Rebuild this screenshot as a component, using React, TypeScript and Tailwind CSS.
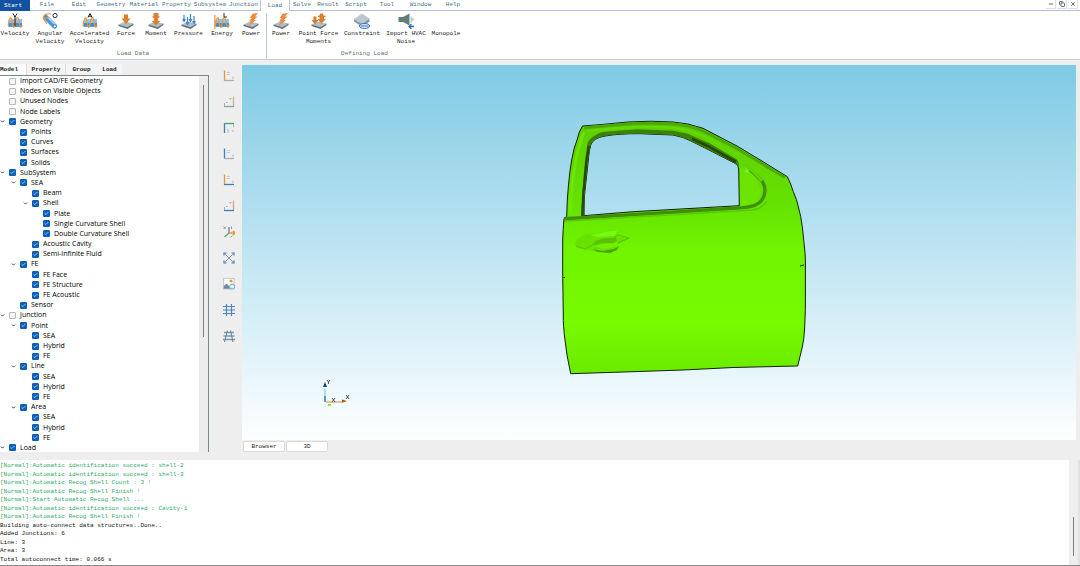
import React, { useState } from "react";
import { Check, ChevronDown, Copy, Minus, X } from "lucide-react";
import clsx from "clsx";

const MONO = "font-['Liberation_Mono',monospace]";

const menus = [
    { label: "File", width: "w-[34px]" },
    { label: "Edit", width: "w-[30px]" },
    { label: "Geometry", width: "w-[34px]" },
    { label: "Material", width: "w-[32px]" },
    { label: "Property", width: "w-[33px]" },
    { label: "Subsystem", width: "w-[34px]" },
    { label: "Junction", width: "w-[33px]" },
    { label: "Load", width: "w-[30px]" },
    { label: "Solve", width: "w-[24px]" },
    { label: "Result", width: "w-[28px]" },
    { label: "Script", width: "w-[28px]" },
    { label: "Tool", width: "w-[34px]" },
    { label: "Window", width: "w-[33px]" },
    { label: "Help", width: "w-[32px]" },
];

const Plate = () => (
    <>
        <path d="M0.5 11.5 L7 8.5 L15.5 10.5 L9.5 14 Z" fill="#b3bec4" />
        <path d="M0.5 11.5 L9.5 14 L15.5 10.5 V12 L9.5 16 L0.5 13 Z" fill="#5f7377" />
    </>
);

const Wave = () => (
    <>
        <path d="M1.5 7.5 L4 6 H15 V13.5 H1.5 Z" fill="#8cc5f2" />
        <path d="M1.5 10 H15 V13.8 H1.5 Z" fill="#3d8fdc" />
        <path
            d="M1.2 13 C2 3 4.5 3 5.2 9 S7.4 17 8.2 10 S11.5 3 12.2 9 S14 15.5 15.2 12"
            fill="none"
            stroke="#f0942c"
            strokeWidth="1.2"
        />
    </>
);

const Bolt = () => (
    <path d="M9.5 0.8 L15 0 L12 3.6 H14.6 L10.8 7 H13 L5.6 13 L8 8.5 H6 L8.8 5 H7 Z" fill="#f0883a" />
);

const glyphs: Record<string, React.ReactNode> = {
    velocity: (
        <>
            <Wave />
            <path d="M6 0.5 L8 4 L10 0.5 M8 3 V13" stroke="#222" strokeWidth="1" fill="none" />
        </>
    ),
    angular: (
        <>
            <path d="M4 4.5 L12.5 13" stroke="#4a94dc" strokeWidth="5" strokeLinecap="round" />
            <path d="M5.5 4 L13.5 12" stroke="#a9d2f3" strokeWidth="1.6" />
            <circle cx="12.8" cy="13.3" r="1.6" fill="#fff" stroke="#2f74bb" strokeWidth="0.9" />
            <path d="M9 1 C3 0 0.5 3 1.5 6 L5 11 M1.5 6 L7 4" fill="none" stroke="#f0942c" strokeWidth="1.1" />
            <ellipse cx="13" cy="2.6" rx="2.1" ry="2.2" fill="none" stroke="#333" strokeWidth="1" />
        </>
    ),
    accelerated: (
        <>
            <Wave />
            <path d="M6 4.5 L8 0.5 L10 4.5 M7 3.2 H9" stroke="#222" strokeWidth="1" fill="none" />
        </>
    ),
    force: (
        <>
            <Plate />
            <path d="M6 1.5 H10 V5.5 H12.5 L8 11 L3.5 5.5 H6 Z" fill="#df7f2d" />
        </>
    ),
    moment: (
        <>
            <Plate />
            <path d="M5.5 0 H10.5 V3.5 H12.5 L8 7 L3.5 3.5 H5.5 Z M6 6 H10 V8 H12.5 L8 12.5 L3.5 8 H6 Z" fill="#df7f2d" />
        </>
    ),
    pressure: (
        <>
            <Plate />
            <path
                d="M3 2 V8 M1.6 6.2 L3 8.3 L4.4 6.2 M6.5 4 V11 M5.1 9.2 L6.5 11.3 L7.9 9.2 M9.5 1 V8 M8.1 6.2 L9.5 8.3 L10.9 6.2 M13 3 V10 M11.6 8.2 L13 10.3 L14.4 8.2"
                fill="none"
                stroke="#3f86d3"
                strokeWidth="1.2"
            />
        </>
    ),
    energy: (
        <>
            <Wave />
            <path d="M0.8 2 V16" stroke="#f0942c" strokeWidth="1.2" />
            <path d="M10 0 V4 H13" stroke="#333" strokeWidth="1" fill="none" />
        </>
    ),
    power: (
        <>
            <Plate />
            <Bolt />
        </>
    ),
    pointForce: (
        <>
            <Plate />
            <path
                d="M2.5 3.5 H5.5 V7 H7.5 L4 11.5 L0.5 7 H2.5 Z M8.8 0.5 H12.2 V2.5 H14.5 V4 H13 V6 H15 L10.5 10.5 L6.5 6 H8.5 V4 H7 V2.5 H8.8 Z"
                fill="#d97f2b"
            />
        </>
    ),
    constraint: (
        <>
            <path d="M0 6 L8 0.5 L15.5 5.5 L8 11 Z" fill="#bdc7d2" />
            <path d="M0 6 L8 11 L15.5 5.5 V8.5 L8 13.5 L0 8.5 Z" fill="#8794a1" />
            <ellipse cx="10.5" cy="13" rx="5" ry="2.4" fill="#e9f3fd" stroke="#2d6fba" strokeWidth="1" />
            <path d="M6.5 13 H14.5" stroke="#2d6fba" strokeWidth="1" />
        </>
    ),
    hvac: (
        <>
            <path d="M0.5 4 H5 L11.5 0.5 V12.5 L5 9 H0.5 Z" fill="#5e7f78" />
            <path d="M13.2 3.5 V10 M15 5 V8" stroke="#9fb1ad" strokeWidth="1" />
            <path d="M16 13.5 H11.5 M13.4 11.3 L11.2 13.5 L13.4 15.7" stroke="#2d6fba" strokeWidth="1.6" fill="none" />
        </>
    ),
};

const groups = [
    {
        title: "Load Data",
        items: [
            { label: "Velocity", glyph: "velocity", width: "w-[30px]" },
            { label: "Angular Velocity", glyph: "angular", width: "w-[40px]" },
            { label: "Accelerated Velocity", glyph: "accelerated", width: "w-[39px]" },
            { label: "Force", glyph: "force", width: "w-[34px]" },
            { label: "Moment", glyph: "moment", width: "w-[26px]" },
            { label: "Pressure", glyph: "pressure", width: "w-[39px]" },
            { label: "Energy", glyph: "energy", width: "w-[28px]" },
            { label: "Power", glyph: "power", width: "w-[30px]" },
        ],
    },
    {
        title: "Defining Load",
        items: [
            { label: "Power", glyph: "power", width: "w-[28px]" },
            { label: "Point Force Moments", glyph: "pointForce", width: "w-[47px]" },
            { label: "Constraint", glyph: "constraint", width: "w-[40px]" },
            { label: "Import HVAC Noise", glyph: "hvac", width: "w-[48px]" },
            { label: "Monopole", glyph: "", width: "w-[32px]" },
        ],
    },
];

type Row = { label: string; level: number; on?: boolean; open?: boolean };

const rows: Row[] = [
    { label: "Import CAD/FE Geometry", level: 0 },
    { label: "Nodes on Visible Objects", level: 0 },
    { label: "Unused Nodes", level: 0 },
    { label: "Node Labels", level: 0 },
    { label: "Geometry", level: 0, on: true, open: true },
    { label: "Points", level: 1, on: true },
    { label: "Curves", level: 1, on: true },
    { label: "Surfaces", level: 1, on: true },
    { label: "Solids", level: 1, on: true },
    { label: "SubSystem", level: 0, on: true, open: true },
    { label: "SEA", level: 1, on: true, open: true },
    { label: "Beam", level: 2, on: true },
    { label: "Shell", level: 2, on: true, open: true },
    { label: "Plate", level: 3, on: true },
    { label: "Single Curvature Shell", level: 3, on: true },
    { label: "Double Curvature Shell", level: 3, on: true },
    { label: "Acoustic Cavity", level: 2, on: true },
    { label: "Semi-Infinite Fluid", level: 2, on: true },
    { label: "FE", level: 1, on: true, open: true },
    { label: "FE Face", level: 2, on: true },
    { label: "FE Structure", level: 2, on: true },
    { label: "FE Acoustic", level: 2, on: true },
    { label: "Sensor", level: 1, on: true },
    { label: "Junction", level: 0, open: true },
    { label: "Point", level: 1, on: true, open: true },
    { label: "SEA", level: 2, on: true },
    { label: "Hybrid", level: 2, on: true },
    { label: "FE", level: 2, on: true },
    { label: "Line", level: 1, on: true, open: true },
    { label: "SEA", level: 2, on: true },
    { label: "Hybrid", level: 2, on: true },
    { label: "FE", level: 2, on: true },
    { label: "Area", level: 1, on: true, open: true },
    { label: "SEA", level: 2, on: true },
    { label: "Hybrid", level: 2, on: true },
    { label: "FE", level: 2, on: true },
    { label: "Load", level: 0, on: true, open: true },
];

const indents = ["pl-0", "pl-[11px]", "pl-[23px]", "pl-[34px]"];

const logs = [
    "[Normal]:Automatic identification succeed : shell-2",
    "[Normal]:Automatic identification succeed : shell-3",
    "[Normal]:Automatic Recog Shell Count : 3 !",
    "[Normal]:Automatic Recog Shell Finish !",
    "[Normal]:Start Automatic Recog Shell ...",
    "[Normal]:Automatic identification succeed : Cavity-1",
    "[Normal]:Automatic Recog Shell Finish !",
    "Building auto-connect data structures..Done..",
    "Added Junctions: 6",
    "Line: 3",
    "Area: 3",
    "Total autoconnect time: 0.066 s",
];

const GRAY = "#a9b0b6";
const BLUE = "#3a7fc4";
const ORANGE = "#f0942f";

const Corner = ({ left, bottom }: { left: string; bottom: string }) => (
    <>
        <path d="M1.5 0.5 V11" stroke={left} strokeWidth="1.3" />
        <path d="M1 10.5 H11" stroke={bottom} strokeWidth="1.3" />
        <path d="M4.5 2.5 H6.5 M4.5 4.5 H6.5 M10 6.5 V9" stroke="#b3bac6" strokeWidth="1" />
    </>
);

const Slant = ({ right, bottom }: { right: string; bottom: string }) => (
    <>
        <path d="M10.5 0.5 V11" stroke={right} strokeWidth="1.3" />
        <path d="M1 10.5 H11" stroke={bottom} strokeWidth="1.3" />
        <path d="M1.5 10 V7 M3 6.5 H4.5 M6.5 2 L7.5 3.5 L8.5 2" stroke="#a9b2bf" strokeWidth="1" fill="none" />
    </>
);

const tools: { name: string; art: React.ReactNode }[] = [
    { name: "Front view", art: <Corner left={ORANGE} bottom={GRAY} /> },
    { name: "Back view", art: <Slant right="#c9b489" bottom="#8aa79a" /> },
    {
        name: "Left view",
        art: (
            <>
                <path d="M1.5 1 V11" stroke={BLUE} strokeWidth="1.3" />
                <path d="M1 1.5 H11" stroke="#4aa46f" strokeWidth="1.3" />
                <path d="M10.5 2 V5 M4 8 H6 M4 10 H6 M9 8 L10.5 10" stroke="#aab4c2" strokeWidth="1" />
            </>
        ),
    },
    { name: "Right view", art: <Corner left={BLUE} bottom={GRAY} /> },
    { name: "Top view", art: <Corner left={ORANGE} bottom={BLUE} /> },
    { name: "Bottom view", art: <Slant right="#dba765" bottom={BLUE} /> },
    {
        name: "Isometric view",
        art: (
            <>
                <path d="M6 7 V1" stroke="#8793a3" strokeWidth="1.6" />
                <path d="M6 7 H12 M10 5 L12 7 L10 9" stroke={ORANGE} strokeWidth="1.4" fill="none" />
                <path d="M6 7 L1.5 11" stroke="#5aa77b" strokeWidth="1.4" />
                <path d="M0.5 0.5 L3 3 M3 0.5 L0.5 3 M8.5 0.5 V3 M7.5 11.5 L9.5 9.5" stroke="#8d99a8" strokeWidth="1" />
            </>
        ),
    },
    {
        name: "Fit to window",
        art: (
            <>
                <path d="M2 2 L10 10 M10 2 L2 10" stroke="#7f8b96" strokeWidth="0.9" />
                <path d="M1 3.5 V1 H3.5 M8.5 1 H11 V3.5 M11 8.5 V11 H8.5 M3.5 11 H1 V8.5" stroke={BLUE} strokeWidth="1.2" fill="none" />
            </>
        ),
    },
    {
        name: "Snapshot",
        art: (
            <>
                <rect x="0.5" y="0.5" width="10.5" height="10.5" fill="#f8fafc" stroke="#b9c2ca" strokeWidth="0.8" />
                <path d="M0.8 10.8 V8 L3.8 5.5 L8 10.8 Z" fill="#7688a0" />
                <circle cx="8" cy="3" r="1.5" fill={ORANGE} />
                <ellipse cx="9.2" cy="8.6" rx="2.6" ry="2.4" fill="#e5f1fb" stroke="#6ea5d6" strokeWidth="1" />
            </>
        ),
    },
    {
        name: "Grid",
        art: <path d="M3.5 0 V12 M8.5 0 V12 M0 2.5 H12 M0 6 H12 M0 9.5 H12" stroke="#4b87bd" strokeWidth="1.2" />,
    },
    {
        name: "Perspective grid",
        art: (
            <>
                <path d="M1 2.5 H11 M0.5 6 H11.5 M0 9.5 H12" stroke="#8a96a3" strokeWidth="1.4" />
                <path d="M4.5 0.5 L1.5 12 M7.5 0.5 L10 12" stroke="#4b87bd" strokeWidth="1" />
            </>
        ),
    },
];

const TitleBar = () => (
    <header className={clsx("flex h-[11px] text-[6px] leading-[8px] text-[#47707f]", MONO)}>
        <button className="w-[30px] bg-[#1250a0] pr-1 text-white">Start</button>
        <nav className="flex">
            {menus.map((menu) => (
                <button
                    key={menu.label}
                    className={clsx(
                        menu.width,
                        "border-[#b3c0dc]",
                        menu.label === "Load" ? "border-x" : "border-b"
                    )}
                >
                    {menu.label}
                </button>
            ))}
        </nav>
        <div className="flex flex-1 justify-end gap-px border-b border-[#b3c0dc] pr-[2px] text-[#6b7178]">
            {[Minus, Copy, X].map((Icon, i) => (
                <button key={i} className="flex h-[9px] w-[10px] items-center justify-center border-r border-b border-[#e0e0e0]">
                    <Icon size={6} strokeWidth={4} />
                </button>
            ))}
        </div>
    </header>
);

const Ribbon = () => (
    <section className={clsx("flex h-[49px] border-b border-[#c3ccd8] pt-[2px] text-[6px] leading-[8px]", MONO)}>
        {groups.map((group, i) => (
            <div key={i} className="flex flex-col border-r border-[#bac6da] last:border-r-0">
                <div className="flex flex-1">
                    {group.items.map((item) => (
                        <button key={item.label} className={clsx(item.width, "flex flex-col items-center text-[#1b1b1b]")}>
                            <svg viewBox="0 0 16 16" className="mb-px h-[16px] w-[16px] shrink-0">
                                {glyphs[item.glyph]}
                            </svg>
                            <span className="w-[44px] text-center">{item.label}</span>
                        </button>
                    ))}
                </div>
                <p className="pb-px text-center text-[#5b6f6c]">{group.title}</p>
            </div>
        ))}
    </section>
);

const TreeRow = ({ row }: { row: Row }) => {
    const [on, setOn] = useState(!!row.on);
    return (
        <li className={clsx("flex items-center", indents[row.level])}>
            <span className="flex w-[9px] shrink-0 items-center">
                {row.open && (
                    <button aria-label={`Collapse ${row.label}`}>
                        <ChevronDown size={5} strokeWidth={4} className="text-[#222]" />
                    </button>
                )}
            </span>
            <label className="flex items-center gap-[4px] whitespace-nowrap">
                <span className="relative flex">
                    <input
                        type="checkbox"
                        checked={on}
                        onChange={() => setOn(!on)}
                        className="h-[7px] w-[7px] appearance-none rounded-[1px] border border-[#b4b8b8] bg-[#f5f5f5] checked:border-[#0a5fb8] checked:bg-[#0a5fb8]"
                    />
                    {on && <Check size={5} strokeWidth={3} className="pointer-events-none absolute top-px left-px text-white" />}
                </span>
                {row.label}
            </label>
        </li>
    );
};

const ModelPanel = () => (
    <aside className="flex w-[209px] flex-col">
        <div className={clsx("flex h-[11px] text-[6px] font-bold text-[#222]", MONO)}>
            <button className="w-[26px] bg-white pr-2">Model</button>
            <button className="w-[39px] border-l border-[#dcdcdc] bg-[#f4f4f4]">Property</button>
            <button className="w-[32px] border-l border-[#dcdcdc] bg-[#f4f4f4]">Group</button>
            <button className="w-[25px] bg-[#f4f4f4]">Load</button>
        </div>
        <div className="flex min-h-0 flex-1 overflow-hidden border-t border-r border-[#7d848a] bg-white">
            <ul className="grid h-[377px] flex-1 auto-rows-fr font-['Open_Sans',sans-serif] text-[7px] leading-[10px] font-medium text-black">
                {rows.map((row, i) => (
                    <TreeRow key={i} row={row} />
                ))}
            </ul>
            <div className="flex w-[9px] justify-center bg-[#ececec] pt-[9px]">
                <div className="h-[252px] w-px bg-[#808080]" />
            </div>
        </div>
    </aside>
);

const Scene = () => (
    <svg viewBox="242 65 834 375" className="h-full w-full">
        <defs>
            <linearGradient id="skin" x1="0" y1="0" x2="0" y2="1">
                <stop offset="0" stopColor="#5ccc04" />
                <stop offset="0.35" stopColor="#66e400" />
                <stop offset="0.5" stopColor="#70f400" />
                <stop offset="0.8" stopColor="#76fb00" />
                <stop offset="1" stopColor="#6bea00" />
            </linearGradient>
        </defs>
        <path
            fillRule="evenodd"
            fill="url(#skin)"
            stroke="#10200a"
            strokeWidth="1"
            d="M582.5 126 L600 124.7 L628 122 Q651 120.5 673 122 Q688 123 703 128.3 L737 146 L763 161.7 L787.3 176.7 Q791 184 793.3 191.7 Q797 200 798.3 206.7 Q801 216 802.3 226.7 L804 243 Q805.5 255 805.4 262 L805.4 292 Q805.6 310 804.7 327 Q804 340 802.3 347 L797.7 366 L733 367.5 L683 370 L633 371.7 L570.7 373.7 Q566.5 355 565 340 Q563 325 563.3 315 L562.7 273 V240 Q563 230 564 218.5 L566.7 216.5 Q567 200 568.3 187 Q569.5 172 571.7 160 Q574 147 577 140 Q579 131 582.5 126 Z
            M584 215.7 L584.3 197 L588.3 160 Q589 150 590.7 145 Q593 138 605 136 Q620 133.5 640 133.7 L673 135 Q684 137 691 141 L707 149 L735 163.3 Q738.7 165 738.7 169 L739.3 205.7 L633 211.7 Z"
        />
        {/* frame shading */}
        <path d="M584 127.8 L628 124 Q652 122.4 673 124 Q688 125 702 130.5 L736 148 L785 177.5" fill="none" stroke="#4ba90a" strokeWidth="3" />
        <path d="M587 131 Q640 125 674 128 Q690 130 703 136 L745 158" fill="none" stroke="#63d804" strokeWidth="2.4" />
        <path d="M584 132 Q573 158 570 214" fill="none" stroke="#70ec02" strokeWidth="3" opacity="0.7" />
        {/* window rim */}
        <path
            d="M581 216 L582 196 L585 160 L587.5 143 Q591 136 602 132 L637 129.3 L673 130.7 L687 133.5 L710 143.5 L737 159.5 Q739.5 163 739 168
            L737.5 165.5 L735 163.3 L707 149 L691 141 Q684 137 673 135 L640 133.7 Q620 133.5 605 136 Q593 138 590.7 145 L588.3 160 L584.3 197 L584 215.7 Z"
            fill="#3c8209"
        />
        <path d="M582.4 216 L583.2 194 L586.6 160 L589 146" fill="none" stroke="#23480a" strokeWidth="2.2" />
        <path d="M692 138.8 L708 146.2 L736 162" fill="none" stroke="#24490b" strokeWidth="2.6" />
        <path d="M564 218.7 L600 216.6 L680 211.6 L744 207.6 Q757 206.5 762 200 Q768 190 762 181 L750 170" fill="none" stroke="#408f07" strokeWidth="3.4" />
        <path d="M565 221 L680 214.4 L752 210 Q762 209 767 201" fill="none" stroke="#58c805" strokeWidth="1.4" />
        <path d="M740 169 L745 167 L756 178 L760 188 Q761 199 752 203.5 L740 205 Z" fill="#6be402" />
        <path d="M742 166 L746.5 165 L762 181" fill="none" stroke="#62d203" strokeWidth="3" />
        <path d="M744.5 172 L746.5 168 L749 173 Z" fill="#80f525" />
        {/* handle */}
        <path d="M575 243 Q578 236 588 234 L607 231 L618 230 L617 236 L630 238 L620 243 L614 250 L597 252 L577 248 Z" fill="#68e300" />
        <path d="M590 235 L607 231.5 L618 230.5 L615 236 L598 237 Z" fill="#76f80f" />
        <path d="M576 246 L585 249 L596 243 L612 239 L618 235 L629 238 L618 243 L600 242" fill="none" stroke="#58c202" strokeWidth="1" />
        <path d="M593 242.5 L602 238.5 L616 238 L617 241 L612 243 L600 243.5 L596 246 Z" fill="#58c204" />
        <path d="M598 244.5 L612 243.5 L617 242 L619 245 L611 248 L602 248.5 L595 246 Z" fill="#72f008" />
        <path d="M592 249 L603 251 L614 249 L619 246 L617 250 L610 253 L598 252 Z" fill="#4aa405" />
        <path d="M800 266 L804 265 M563.5 277.5 H565" stroke="#10200a" strokeWidth="1" />
        {/* axis triad */}
        <path d="M325 402 V389" stroke="#6db8f2" strokeWidth="1" />
        <path d="M325 402 V396" stroke="#24517c" strokeWidth="1" />
        <path d="M323 387 L325 382 L327 387 Z" fill="#0d4384" />
        <path d="M326 402 H342" stroke="#d98a3b" strokeWidth="1" />
        <path d="M342 399.5 L347 401 L342 402.8 Z" fill="#b5560f" />
        <rect x="328" y="404" width="3" height="1.8" fill="#74f500" />
        <path d="M327 380 L328.5 382 L330 380 M328.5 382 V384 M346 395 L349 399 M349 395 L346 399 M332 398 L335 402 M335 398 L332 402" fill="none" stroke="#333" strokeWidth="0.8" />
    </svg>
);

const App: React.FC = () => {
    return (
        <div className="flex h-screen flex-col overflow-hidden bg-white">
            <TitleBar />
            <Ribbon />
            <main className="flex min-h-0 flex-1 bg-[#eeeeee] pt-[4px] pb-[8px]">
                <ModelPanel />
                <div className="flex w-[33px] flex-col items-center gap-[14px] pt-[6px] pl-[7px]">
                    {tools.map((tool) => (
                        <button key={tool.name} aria-label={tool.name}>
                            <svg viewBox="0 0 12 12" className="h-[12px] w-[12px]">
                                {tool.art}
                            </svg>
                        </button>
                    ))}
                </div>
                <section className="flex min-w-0 flex-1 flex-col pt-px pr-[4px]">
                    <div className="min-h-0 flex-1 bg-linear-to-b from-[#7ecae4] to-[#fdffff]">
                        <Scene />
                    </div>
                    <div className={clsx("flex gap-px pt-px pl-px text-[6px] leading-[8px] text-[#222]", MONO)}>
                        <button className="h-[11px] w-[42px] rounded-[2px] border border-[#dddad8] bg-white">Browser</button>
                        <button className="h-[11px] w-[42px] rounded-[2px] border border-[#dddad8] bg-white">3D</button>
                    </div>
                </section>
            </main>
            <footer className="flex h-[106px] border-b border-[#8a8a8a] bg-white">
                <div className={clsx("mt-[2px] grid h-[102px] flex-1 auto-rows-fr text-[6px] leading-[8px] whitespace-pre", MONO)}>
                    {logs.map((line, i) => (
                        <p key={i} className={line.startsWith("[Normal]") ? "text-[#2faa68]" : "text-[#111]"}>
                            {line}
                        </p>
                    ))}
                </div>
                <div className="flex w-[9px] justify-center bg-[#eeeeee] pt-[57px]">
                    <div className="h-[39px] w-px bg-[#808080]" />
                </div>
                <div className="w-[2px] bg-[#e2e2e2]" />
            </footer>
        </div>
    );
};

export default App;
